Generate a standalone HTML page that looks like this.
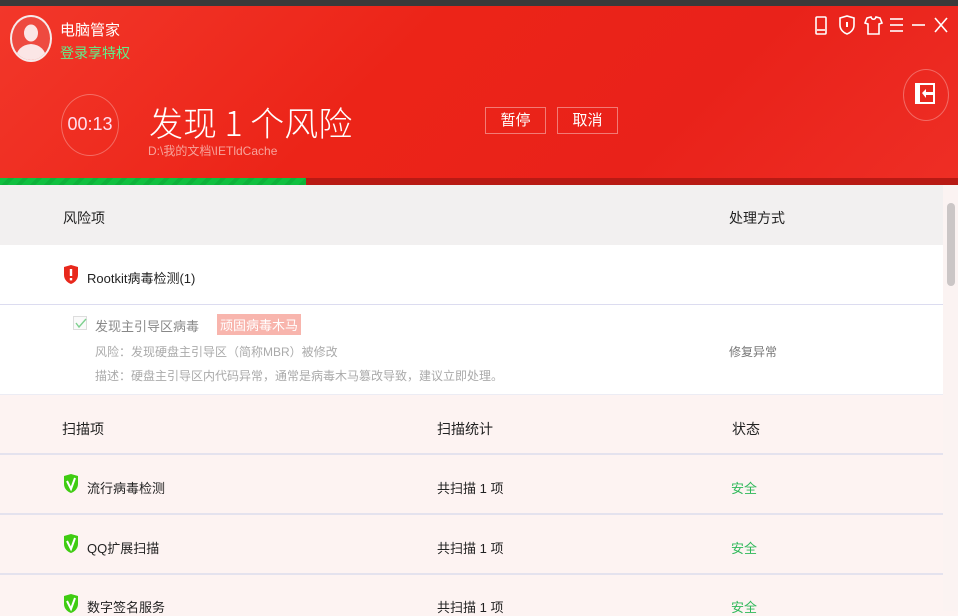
<!DOCTYPE html>
<html><head><meta charset="utf-8">
<style>
*{margin:0;padding:0;box-sizing:border-box}
body{width:958px;height:611px;overflow:hidden;position:relative;font-family:"Liberation Sans","Noto Sans CJK SC",sans-serif;background:#fdf3f2}
.a{position:absolute}
.hdr{left:0;top:0;width:958px;height:7px;background:#3a3a3a}
.red{left:0;top:6px;width:958px;height:173px;background:linear-gradient(135deg,#f2372a 0%,#ec2418 40%,#e9221a 70%,#ee2e25 100%)}
.t{white-space:nowrap}
.btn{border:1px solid rgba(255,255,255,.4);color:#fff;font-size:15px;text-align:center;line-height:25px;height:27px}
</style></head><body>
<div class="a hdr"></div>
<div class="a red"></div>
<!-- avatar -->
<div class="a" style="left:10px;top:15px;width:42px;height:47px;border-radius:50%;background:#ee4a40;border:2.5px solid #f6eaea;overflow:hidden">
<svg width="38" height="43" viewBox="0 0 38 43"><ellipse cx="19" cy="16" rx="7" ry="8.5" fill="#fbe6e6"/><path d="M3 43 Q5 28 19 27 Q33 28 35 43Z" fill="#fbe6e6"/></svg></div>
<div class="a t" style="left:60px;top:19px;color:#fff;font-size:15px">电脑管家</div>
<div class="a t" style="left:60px;top:43px;color:#5ff08a;font-size:14px">登录享特权</div>
<!-- top icons -->
<svg class="a" style="left:812px;top:14px" width="140" height="24" viewBox="0 0 140 24" fill="none" stroke="#fff" stroke-width="1.6">
<rect x="4" y="3" width="10" height="17" rx="1"/><line x1="5" y1="16" x2="13" y2="16"/>
<path d="M28 4 L35 2 L42 4 V11 C42 16 38 19 35 20 C32 19 28 16 28 11Z"/><line x1="35" y1="8" x2="35" y2="13" stroke-width="2"/>
<path d="M55 4 L59 3 C60 6 63 6 64 3 L68 4 L70 9 L67 10 V20 H56 V10 L53 9Z"/>
<line x1="78" y1="5" x2="91" y2="5"/><line x1="78" y1="11" x2="91" y2="11"/><line x1="78" y1="17" x2="91" y2="17"/>
<line x1="100" y1="11" x2="113" y2="11"/>
<line x1="123" y1="4" x2="135" y2="18"/><line x1="135" y1="4" x2="123" y2="18"/>
</svg>
<!-- right circle -->
<div class="a" style="left:903px;top:69px;width:46px;height:52px;border-radius:50%;border:1.5px solid rgba(255,255,255,.3)"></div>
<svg class="a" style="left:914px;top:82px" width="24" height="24" viewBox="0 0 24 24"><rect x="1" y="1" width="20" height="21" fill="#fff"/><rect x="6" y="3" width="13" height="17" fill="#e8271d"/><path d="M8 11 L12 7 V10 H19 V13 H12 V16Z" fill="#fff"/></svg>
<!-- timer -->
<div class="a" style="left:61px;top:94px;width:58px;height:62px;border-radius:50%;border:1.5px solid rgba(255,255,255,.3)"></div>
<div class="a t" style="left:61px;top:114px;width:58px;text-align:center;color:#fde;font-size:18px">00:13</div>
<div class="a t" style="left:149px;top:97px;color:#fff;font-size:34px;font-weight:300;font-family:'Noto Sans CJK SC','Liberation Sans',sans-serif">发现 <span style="font-weight:200">1</span> 个风险</div>
<div class="a t" style="left:148px;top:142px;color:#f7a39b;font-size:12px">D:\我的文档\IETldCache</div>
<div class="a btn" style="left:485px;top:107px;width:61px">暂停</div>
<div class="a btn" style="left:557px;top:107px;width:61px">取消</div>
<!-- progress -->
<div class="a" style="left:0;top:178px;width:958px;height:7px;background:#b81a14"></div>
<div class="a" style="left:0;top:178px;width:306px;height:7px;background:repeating-linear-gradient(135deg,#10c040 0 6px,#0db23a 6px 10px)"></div>
<!-- risk header -->
<div class="a" style="left:0;top:185px;width:943px;height:60px;background:#f2f0f0"></div>
<div class="a t" style="left:63px;top:208px;font-size:14px;color:#222">风险项</div>
<div class="a t" style="left:729px;top:208px;font-size:14px;color:#222">处理方式</div>
<div class="a" style="left:0;top:245px;width:943px;height:150px;background:#fff"></div>
<svg class="a" style="left:63px;top:265px" width="16" height="20" viewBox="0 0 16 20"><path d="M1 2 L8 0 L15 2 V10 C15 15 11 18 8 19 C5 18 1 15 1 10Z" fill="#e8281c"/><rect x="6.8" y="4" width="2.4" height="7" fill="#fff"/><rect x="6.8" y="13" width="2.4" height="2.4" fill="#fff"/></svg>
<div class="a t" style="left:87px;top:268px;font-size:13px;color:#222">Rootkit病毒检测(1)</div>
<div class="a" style="left:0;top:304px;width:943px;height:1px;background:#dcdcf0"></div>
<div class="a" style="left:73px;top:316px;width:14px;height:14px;border:1px solid #ddd;background:#fafafa"></div>
<svg class="a" style="left:74px;top:316px" width="14" height="14"><path d="M2 7 L5 11 L12 3" stroke="#7ed08f" stroke-width="1.4" fill="none"/></svg>
<div class="a t" style="left:95px;top:316px;font-size:13px;color:#888">发现主引导区病毒</div>
<div class="a t" style="left:217px;top:314px;font-size:13px;color:#fff;background:#f8b5ad;padding:1px 3px">顽固病毒木马</div>
<div class="a t" style="left:95px;top:343px;font-size:12px;color:#aaa">风险：发现硬盘主引导区（简称MBR）被修改</div>
<div class="a t" style="left:729px;top:343px;font-size:12px;color:#777">修复异常</div>
<div class="a t" style="left:95px;top:367px;font-size:12px;color:#aaa">描述：硬盘主引导区内代码异常，通常是病毒木马篡改导致，建议立即处理。</div>
<div class="a" style="left:0;top:394px;width:943px;height:1px;background:#ececf4"></div>
<!-- scan -->
<div class="a t" style="left:62px;top:419px;font-size:14px;color:#222">扫描项</div>
<div class="a t" style="left:437px;top:419px;font-size:14px;color:#222">扫描统计</div>
<div class="a t" style="left:732px;top:419px;font-size:14px;color:#222">状态</div>
<div class="a" style="left:0;top:453px;width:943px;height:2px;background:#e4e2ee"></div>
<div class="a" style="left:0;top:513px;width:943px;height:2px;background:#e4e2ee"></div>
<div class="a" style="left:0;top:573px;width:943px;height:2px;background:#e4e2ee"></div>
<svg class="a" style="left:63px;top:474px" width="16" height="20" viewBox="0 0 16 20"><path d="M1 2 L8 0 L15 2 V10 C15 15 11 18 8 19 C5 18 1 15 1 10Z" fill="#3fcc12"/><path d="M4 7 L8 15 L12 4" stroke="#fff" stroke-width="2" fill="none"/></svg>
<svg class="a" style="left:63px;top:534px" width="16" height="20" viewBox="0 0 16 20"><path d="M1 2 L8 0 L15 2 V10 C15 15 11 18 8 19 C5 18 1 15 1 10Z" fill="#3fcc12"/><path d="M4 7 L8 15 L12 4" stroke="#fff" stroke-width="2" fill="none"/></svg>
<svg class="a" style="left:63px;top:594px" width="16" height="20" viewBox="0 0 16 20"><path d="M1 2 L8 0 L15 2 V10 C15 15 11 18 8 19 C5 18 1 15 1 10Z" fill="#3fcc12"/><path d="M4 7 L8 15 L12 4" stroke="#fff" stroke-width="2" fill="none"/></svg>
<div class="a t" style="left:87px;top:478px;font-size:13px;color:#222">流行病毒检测</div>
<div class="a t" style="left:87px;top:538px;font-size:13px;color:#222">QQ扩展扫描</div>
<div class="a t" style="left:87px;top:597px;font-size:13px;color:#222">数字签名服务</div>
<div class="a t" style="left:437px;top:478px;font-size:13px;color:#222">共扫描 1 项</div>
<div class="a t" style="left:437px;top:538px;font-size:13px;color:#222">共扫描 1 项</div>
<div class="a t" style="left:437px;top:597px;font-size:13px;color:#222">共扫描 1 项</div>
<div class="a t" style="left:731px;top:478px;font-size:13px;color:#2fb85a">安全</div>
<div class="a t" style="left:731px;top:538px;font-size:13px;color:#2fb85a">安全</div>
<div class="a t" style="left:731px;top:597px;font-size:13px;color:#2fb85a">安全</div>
<!-- scrollbar -->
<div class="a" style="left:943px;top:185px;width:15px;height:426px;background:#fbf3f2"></div>
<div class="a" style="left:947px;top:203px;width:8px;height:83px;border-radius:4px;background:#cbc6c6"></div>
</body></html>
